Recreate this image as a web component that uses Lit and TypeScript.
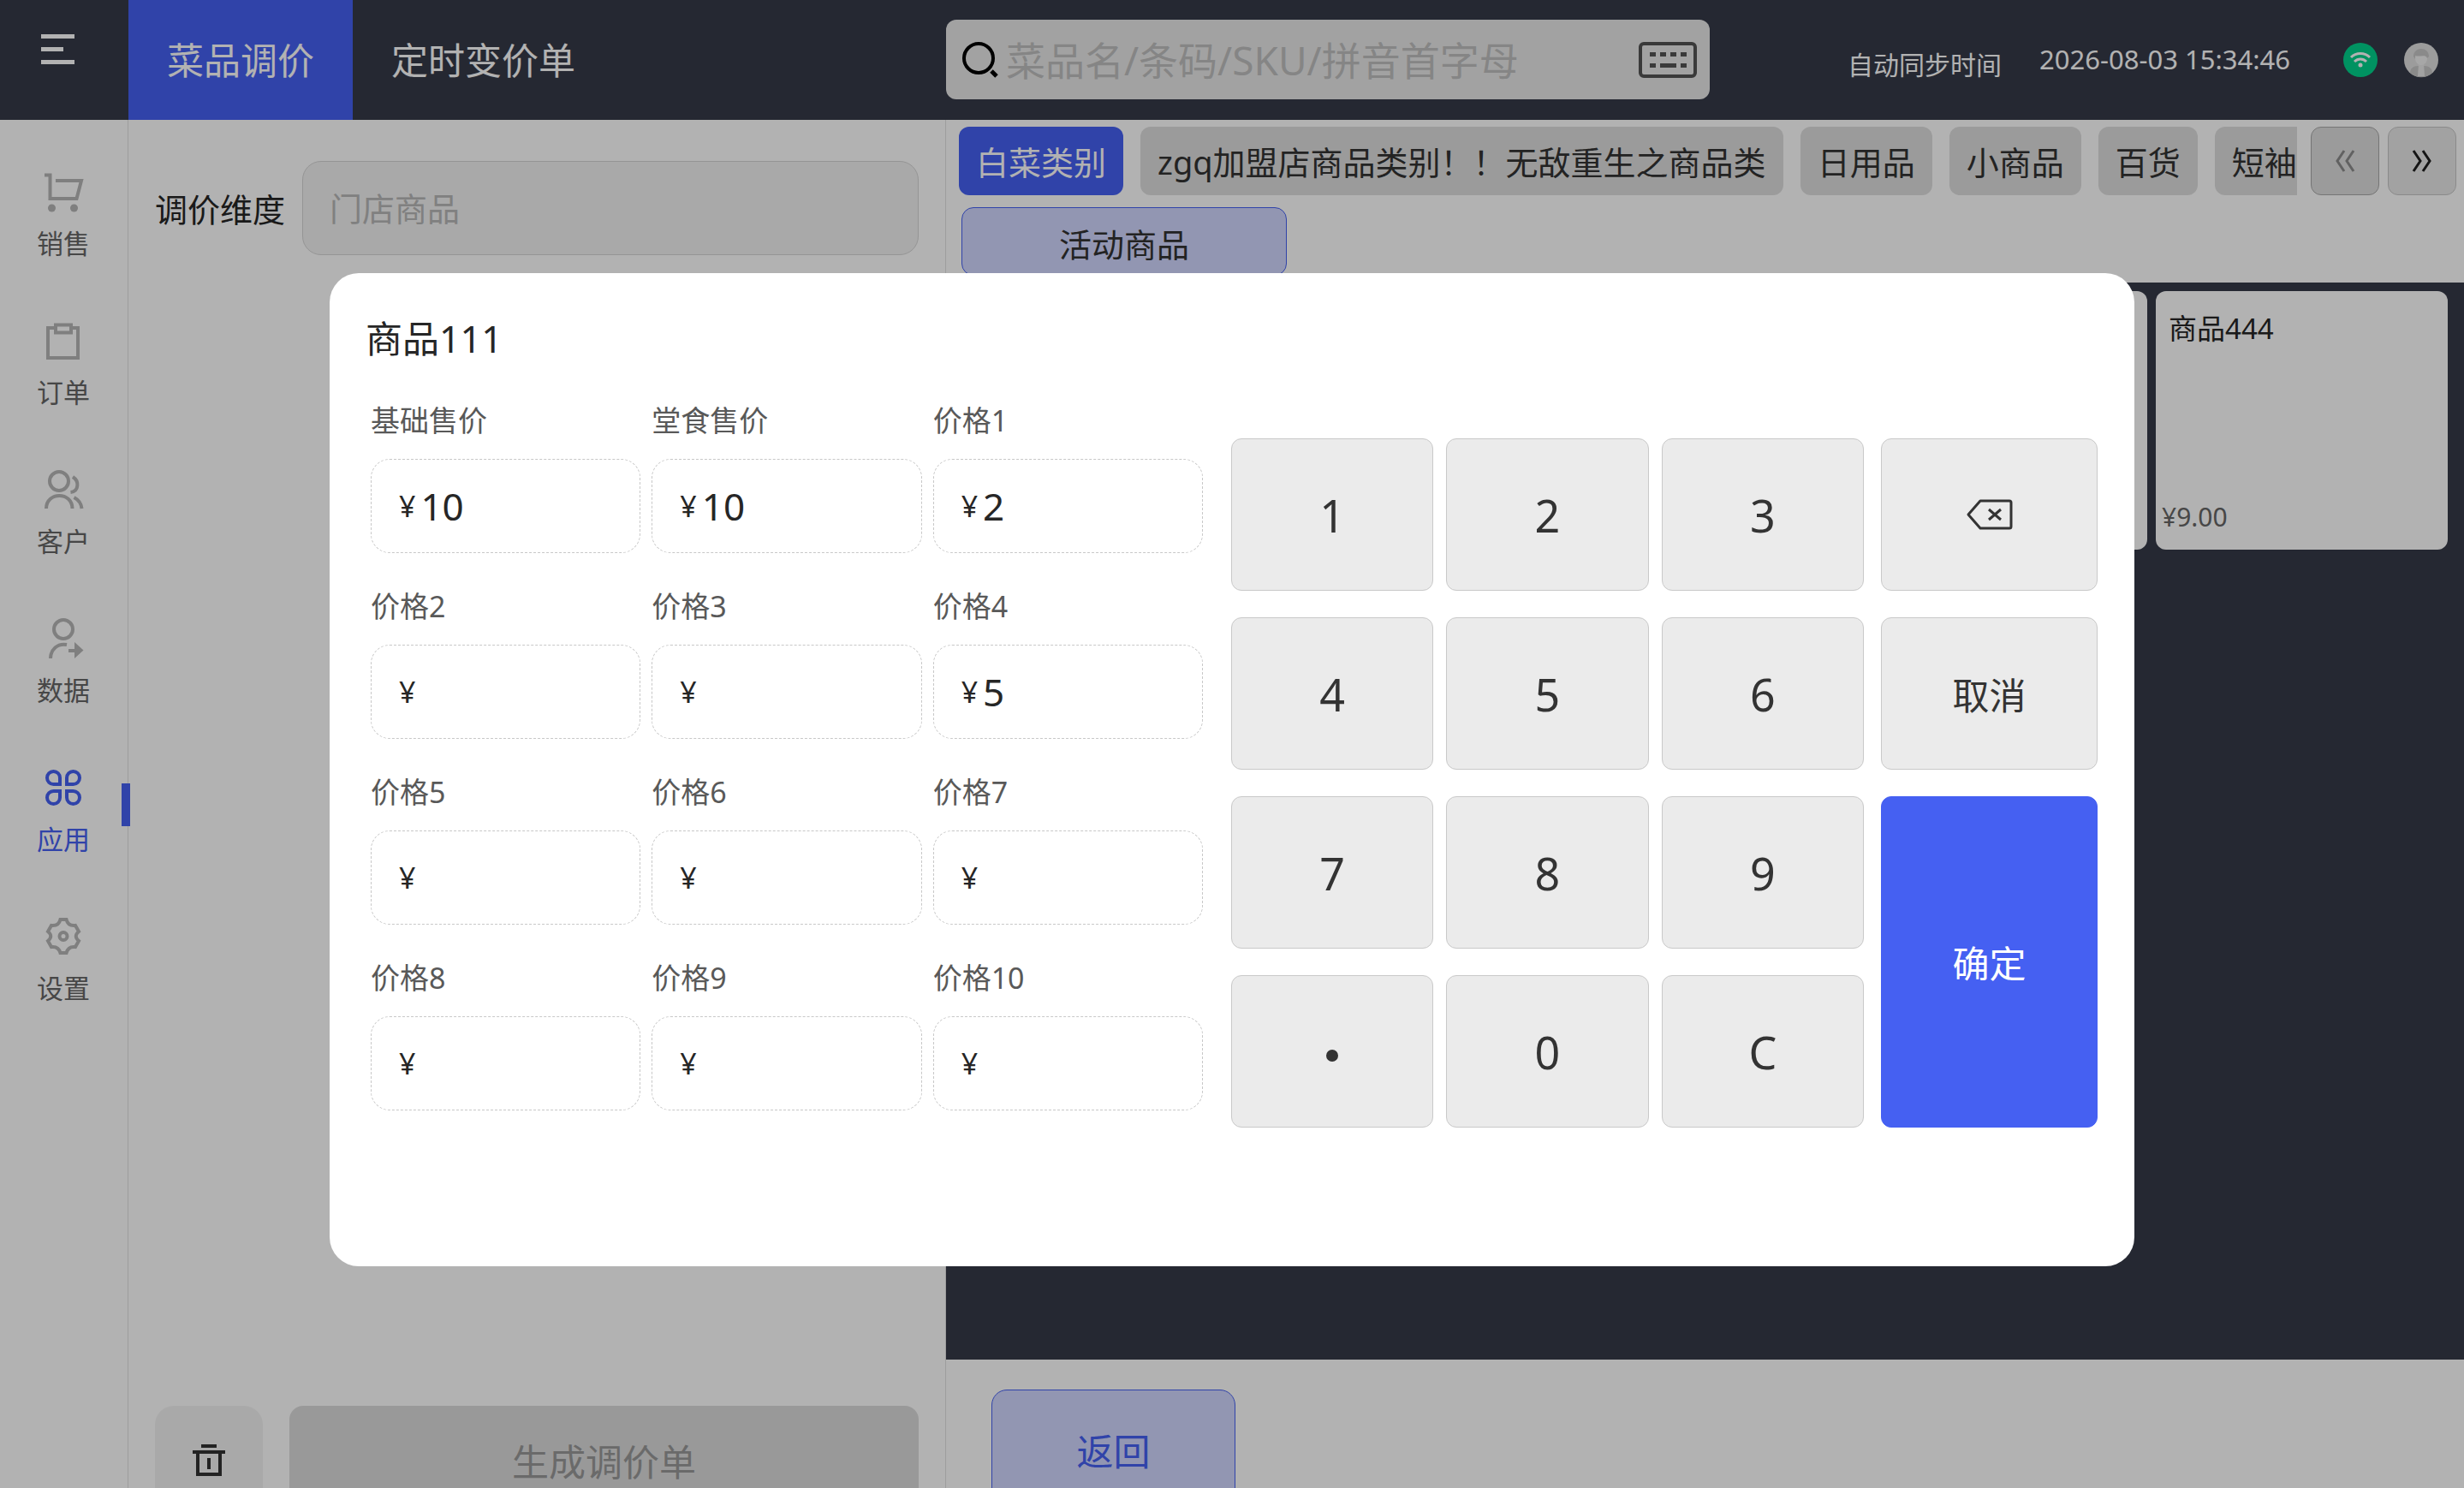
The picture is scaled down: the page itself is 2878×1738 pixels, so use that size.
import { LitElement, html, css, svg, nothing } from "lit";
import { customElement, state } from "lit/decorators.js";
import { classMap } from "lit/directives/class-map.js";

const navIcons = {
  cart: svg`<g fill="none" stroke="currentColor" stroke-width="4"><path d="M2 2.500H8.500V30H39.500L45 9H15"/></g><circle cx="10.500" cy="41" r="4.500" fill="currentColor"/><circle cx="36.500" cy="41" r="4.500" fill="currentColor"/>`,
  clipboard: svg`<g fill="none" stroke="currentColor" stroke-width="4"><path d="M14 7H6V42H41V7H33"/><path d="M15 3.500H33V12.500H15Z"/></g>`,
  customers: svg`<g transform="translate(0 -2)" fill="none" stroke="currentColor" stroke-width="4"><circle cx="19" cy="14" r="11"/><path d="M4 46C4 26 34.500 26 34.500 46"/><path d="M35 9C43 14 42 26 32.500 27"/><path d="M36.500 33C42 36 45 40 45.500 46"/></g>`,
  data: svg`<g transform="translate(0 -3)"><g fill="none" stroke="currentColor" stroke-width="4"><circle cx="24" cy="14" r="11"/><path d="M9 48C9 38 17 30 28 32"/></g><path d="M30 37H37V29L47.500 38.500L37 48V41H30Z" fill="currentColor"/></g>`,
  apps: svg`<g transform="translate(0 -2)" fill="none" stroke="currentColor" stroke-width="4"><path d="M20 20H12.500A7.500 7.500 0 1 1 20 12.500Z"/><path d="M28 20H35.500A7.500 7.500 0 1 0 28 12.500Z"/><path d="M20 28H12.500A7.500 7.500 0 1 0 20 35.500Z"/><path d="M28 28H35.500A7.500 7.500 0 1 1 28 35.500Z"/></g>`,
  settings: svg`<g fill="none" stroke="currentColor" stroke-width="4"><path d="M20.500 2H27.500Q29.500 10 38 9L42 16Q35.500 21.500 42 27L38 34Q29.500 33 27.500 41H20.500Q18.500 33 10 34L6 27Q12.500 21.500 6 16L10 9Q18.500 10 20.500 2Z"/><circle cx="24" cy="21.500" r="4.500"/></g>`,
};

const navItems: { label: string; icon: keyof typeof navIcons }[] = [
  { label: "销售", icon: "cart" },
  { label: "订单", icon: "clipboard" },
  { label: "客户", icon: "customers" },
  { label: "数据", icon: "data" },
  { label: "应用", icon: "apps" },
  { label: "设置", icon: "settings" },
];

const categories = [
  "白菜类别",
  "zgq加盟店商品类别！！无敌重生之商品类",
  "日用品",
  "小商品",
  "百货",
  "短袖",
];

const keys = ["1", "2", "3", "4", "5", "6", "7", "8", "9", ".", "0", "C"];

const base = css`
  * {
    box-sizing: border-box;
  }
  button,
  input {
    font: inherit;
    color: inherit;
    margin: 0;
    padding: 0;
    border: 0;
    background: none;
  }
  svg {
    display: block;
    flex: none;
    overflow: visible;
  }
`;

@customElement("pos-header")
export class PosHeader extends LitElement {
  static styles = [
    base,
    css`
      :host {
        display: flex;
        height: 140px;
        background: #363a48;
        color: #fff;
      }
      .start {
        display: flex;
        align-items: stretch;
        flex: 0 0 1105px;
      }
      .menu {
        display: flex;
        align-items: flex-start;
        width: 150px;
        padding: 40px 48px;
      }
      .tab {
        padding: 0 45px 4px;
        font-size: 43px;
      }
      .tab.active {
        background: #4560f2;
      }
      .search {
        display: flex;
        align-items: center;
        flex: 0 0 892px;
        height: 93px;
        margin-top: 23px;
        padding: 0 15px 0 18px;
        border-radius: 12px;
        background: #e9e9e9;
      }
      .query {
        flex: 1;
        min-width: 0;
        margin-left: 8px;
        height: 70px;
        font-size: 46px;
        color: #333;
        outline: none;
      }
      .query::placeholder {
        color: #bfbfbf;
        opacity: 1;
      }
      .end {
        display: flex;
        flex: 1;
        align-items: center;
        justify-content: flex-end;
        padding-right: 30px;
        white-space: nowrap;
      }
      .sync {
        font-size: 30px;
        padding-top: 8px;
      }
      .clock {
        font-size: 31px;
        margin: 0 62px 0 44px;
        padding-bottom: 2px;
      }
      .avatar {
        margin-left: 31px;
      }
    `,
  ];

  render() {
    return html`
      <div class="start">
        <button class="menu" aria-label="菜单">
          <svg width="40" height="36" viewBox="0 0 40 36" fill="#fff">
            <path d="M0 0H39V5H0ZM0 15H26V20H0ZM0 30H39V35H0Z" />
          </svg>
        </button>
        <button class="tab active">菜品调价</button>
        <button class="tab">定时变价单</button>
      </div>
      <div class="search">
        <svg width="44" height="44" viewBox="0 0 44 44" fill="none" stroke="#000" stroke-width="4">
          <circle cx="20" cy="20" r="17" />
          <path d="M35 35L41 41" stroke-width="5" />
        </svg>
        <input class="query" type="text" aria-label="搜索" placeholder="菜品名/条码/SKU/拼音首字母" />
        <button aria-label="键盘">
          <svg width="68" height="42" viewBox="0 0 68 42">
            <rect x="2" y="2" width="64" height="38" rx="4" fill="none" stroke="#535353" stroke-width="4" />
            <path fill="#535353" d="M13 12h7v5h-7zM25 12h7v5h-7zM37 12h7v5h-7zM49 12h7v5h-7zM13 25h7v5h-7zM25 25h19v5H25zM49 25h7v5h-7z" />
          </svg>
        </button>
      </div>
      <div class="end">
        <span class="sync">自动同步时间</span>
        <time class="clock">2026-08-03 15:34:46</time>
        <svg width="40" height="40" viewBox="0 0 40 40" fill="none" stroke="#fff" stroke-width="3">
          <circle cx="20" cy="20" r="20" fill="#00d28c" stroke="none" />
          <path d="M9 17C15 11 25 11 31 17M13 22C17 18 23 18 27 22" />
          <circle cx="20" cy="26" r="2.500" fill="#fff" stroke="none" />
        </svg>
        <svg class="avatar" width="40" height="40" viewBox="0 0 40 40">
          <circle cx="20" cy="20" r="20" fill="#e0e0e0" />
          <path d="M7 35C7 30 11 27 16 27H24C29 27 33 30 33 35C26 42 14 42 7 35Z" fill="#c6c6c6" />
          <path d="M17 24H23L24 39H16Z" fill="#e8e8e8" />
          <ellipse cx="20" cy="18" rx="7" ry="8" fill="#f0f0f0" />
          <path d="M11 16C11 4 29 4 29 16L27 18C25 13 18 17 13 15V19Z" fill="#c6c6c6" />
        </svg>
      </div>
    `;
  }
}

@customElement("pos-sidebar")
export class PosSidebar extends LitElement {
  static styles = [
    base,
    css`
      :host {
        display: block;
        flex: 0 0 150px;
        padding-top: 62px;
        border-right: 1px solid #e1e1e1;
        background: #fff;
      }
      .nav {
        display: flex;
        flex-direction: column;
        gap: 70px;
      }
      .item {
        position: relative;
        display: flex;
        flex-direction: column;
        align-items: center;
        gap: 12px;
        height: 104px;
        padding-right: 1px;
        font-size: 31px;
        line-height: 44px;
        color: #666;
        text-decoration: none;
      }
      .item svg {
        color: #b6b6b6;
      }
      .item.active,
      .item.active svg {
        color: #4560f2;
      }
      .item.active::after {
        content: "";
        position: absolute;
        right: -3px;
        top: 17px;
        width: 10px;
        height: 50px;
        background: #4560f2;
      }
    `,
  ];

  render() {
    return html`<nav class="nav">
      ${navItems.map(
        (n) => html`<a href="#" class=${classMap({ item: true, active: n.icon === "apps" })}>
          <svg width="48" height="48" viewBox="0 0 48 48">${navIcons[n.icon]}</svg>
          <span>${n.label}</span>
        </a>`
      )}
    </nav>`;
  }
}

@customElement("pos-order-panel")
export class PosOrderPanel extends LitElement {
  static styles = [
    base,
    css`
      :host {
        display: flex;
        flex-direction: column;
        justify-content: space-between;
        flex: 0 0 955px;
        padding: 48px 31px 0;
        border-right: 1px solid #e1e1e1;
        background: #fff;
      }
      .field {
        display: flex;
        align-items: center;
        gap: 20px;
        font-size: 38px;
        color: #262626;
      }
      .field label {
        padding-bottom: 2px;
      }
      .dimension {
        flex: 1;
        min-width: 0;
        height: 110px;
        padding: 0 31px;
        border: 1px solid #d6d6d6;
        border-radius: 22px;
        background: #f2f2f2;
      }
      .dimension::placeholder {
        color: #b8b8b8;
        opacity: 1;
      }
      .actions {
        display: flex;
        gap: 31px;
        margin-bottom: -31px;
      }
      .clear,
      .create {
        display: flex;
        align-items: center;
        justify-content: center;
        height: 127px;
      }
      .clear {
        width: 126px;
        border-radius: 22px;
        background: #f3f3f3;
      }
      .create {
        flex: 1;
        border-radius: 16px;
        background: #dcdcdc;
        color: #999;
        font-size: 43px;
      }
    `,
  ];

  render() {
    return html`
      <div class="field">
        <label for="dimension">调价维度</label>
        <input id="dimension" class="dimension" type="text" placeholder="门店商品" />
      </div>
      <div class="actions">
        <button class="clear" aria-label="清空">
          <svg width="38" height="38" viewBox="0 0 38 38" fill="none" stroke="#333" stroke-width="4">
            <path d="M10 2H28M0 9H38M6 9V35H32V9M19 16V29" />
          </svg>
        </button>
        <button class="create" disabled>生成调价单</button>
      </div>
    `;
  }
}

@customElement("pos-catalog")
export class PosCatalog extends LitElement {
  static styles = [
    base,
    css`
      :host {
        display: flex;
        flex-direction: column;
        flex: 1;
        min-width: 0;
        background: #fff;
        color: #333;
      }
      .categories {
        display: flex;
        gap: 10px;
        padding: 8px 9px 0 15px;
      }
      .strip {
        display: flex;
        flex: 1;
        gap: 20px;
        min-width: 0;
        margin-right: 6px;
        overflow: hidden;
      }
      .category {
        flex: none;
        height: 80px;
        padding: 0 20px 2px;
        border-radius: 12px;
        background: #dfdfdf;
        font-size: 38px;
        white-space: nowrap;
      }
      .category.active {
        background: #4560f2;
        color: #fff;
      }
      .page {
        display: flex;
        align-items: center;
        justify-content: center;
        flex: none;
        width: 80px;
        height: 80px;
        border: 1px solid #c6c6c6;
        border-radius: 12px;
        background: #e9e9e9;
        color: #1f1f1f;
      }
      .page:disabled {
        border-color: #a8a8a8;
        background: #dfdfdf;
        color: #8c8c8c;
      }
      .subcategories {
        padding: 14px 18px 8px;
      }
      .subcategory,
      .back {
        border: 1px solid #4560f2;
        background: #d2d7ff;
      }
      .subcategory {
        display: block;
        width: 380px;
        height: 80px;
        border-radius: 14px;
        font-size: 38px;
        padding-top: 3px;
      }
      .products {
        display: grid;
        grid-template-columns: repeat(5, minmax(0, 1fr));
        grid-auto-rows: 302px;
        gap: 10px;
        flex: 1;
        padding: 10px 19px 10px 9px;
        background: #363a48;
      }
      .product {
        display: flex;
        flex-direction: column;
        justify-content: space-between;
        align-items: flex-start;
        padding: 18px 7px;
        border-radius: 12px;
        background: #fff;
        color: #262626;
        font-size: 33px;
      }
      .name {
        padding-left: 8px;
      }
      .price {
        color: #666;
        font-size: 30px;
      }
      .footer {
        height: 150px;
        padding: 35px 53px 0;
      }
      .back {
        width: 285px;
        height: 140px;
        border-radius: 18px;
        color: #4560f2;
        font-size: 43px;
      }
    `,
  ];

  render() {
    return html`
      <div class="categories">
        <div class="strip">
          ${categories.map(
            (c, i) => html`<button class=${classMap({ category: true, active: i === 0 })}>${c}</button>`
          )}
        </div>
        <button class="page" disabled aria-label="上一页">
          <svg width="24" height="26" viewBox="0 0 24 26" fill="none" stroke="currentColor" stroke-width="3">
            <path d="M11 1L3 13L11 25M22 1L14 13L22 25" />
          </svg>
        </button>
        <button class="page" aria-label="下一页">
          <svg width="24" height="26" viewBox="0 0 24 26" fill="none" stroke="currentColor" stroke-width="3">
            <path d="M2 1L10 13L2 25M13 1L21 13L13 25" />
          </svg>
        </button>
      </div>
      <div class="subcategories"><button class="subcategory">活动商品</button></div>
      <div class="products">
        <div class="product"></div>
        <div class="product"></div>
        <div class="product"></div>
        <div class="product"></div>
        <div class="product">
          <span class="name">商品444</span>
          <span class="price">¥9.00</span>
        </div>
      </div>
      <div class="footer"><button class="back">返回</button></div>
    `;
  }
}

@customElement("pos-price-dialog")
export class PosPriceDialog extends LitElement {
  @state() private selected = 0;
  @state() private prices = [
    { label: "基础售价", value: "10" },
    { label: "堂食售价", value: "10" },
    { label: "价格1", value: "2" },
    { label: "价格2", value: "" },
    { label: "价格3", value: "" },
    { label: "价格4", value: "5" },
    { label: "价格5", value: "" },
    { label: "价格6", value: "" },
    { label: "价格7", value: "" },
    { label: "价格8", value: "" },
    { label: "价格9", value: "" },
    { label: "价格10", value: "" },
  ];

  static styles = [
    base,
    css`
      :host {
        position: fixed;
        inset: 0;
        display: flex;
        align-items: flex-start;
        padding: 319px 385px 0;
        background: rgba(0, 0, 0, 0.3);
      }
      .dialog {
        flex: 1;
        min-width: 0;
        padding: 47px 43px 162px 42px;
        border-radius: 34px;
        background: #fff;
        color: #262626;
      }
      .title {
        margin: 0;
        font-size: 43px;
        line-height: 60px;
        font-weight: 400;
      }
      .body {
        display: grid;
        grid-template-columns: minmax(0, 1005fr) minmax(0, 739fr) minmax(0, 273fr);
        margin-left: 6px;
      }
      .prices {
        display: grid;
        grid-template-columns: repeat(3, minmax(0, 1fr));
        align-content: start;
        gap: 38px 13px;
        margin: 41px 33px 0 0;
      }
      .price {
        display: flex;
        flex-direction: column;
        gap: 21px;
      }
      .label {
        font-size: 34px;
        line-height: 48px;
        color: #595959;
      }
      .box {
        display: flex;
        align-items: center;
        gap: 6px;
        height: 110px;
        padding: 0 32px;
        border: 1px dashed #c8c8c8;
        border-radius: 22px;
      }
      .yen {
        font-size: 34px;
      }
      .value {
        flex: 1;
        min-width: 0;
        height: 80px;
        font-size: 44px;
        outline: none;
      }
      .digits,
      .commands {
        display: grid;
        grid-template-rows: repeat(4, 178px);
        row-gap: 31px;
        margin-top: 86px;
      }
      .digits {
        grid-template-columns: repeat(3, minmax(0, 1fr));
        column-gap: 15px;
      }
      .commands {
        margin-left: 20px;
      }
      .key {
        display: flex;
        align-items: center;
        justify-content: center;
        border: 1px solid #c9c9c9;
        border-radius: 12px;
        background: #ebebeb;
        color: #333;
        font-size: 52px;
      }
      .point {
        width: 14px;
        height: 14px;
        margin-top: 10px;
        border-radius: 50%;
        background: #333;
      }
      .text {
        font-size: 43px;
      }
      .confirm {
        grid-row: span 2;
        border-color: #4560f2;
        background: #4560f2;
        color: #fff;
      }
    `,
  ];

  private edit(change: (v: string) => string) {
    this.prices = this.prices.map((p, i) => (i === this.selected ? { ...p, value: change(p.value) } : p));
  }

  private press(key: string) {
    this.edit((v) => (key === "C" ? "" : v + key));
  }

  render() {
    return html`<section class="dialog" role="dialog" aria-labelledby="title">
      <h2 class="title" id="title">商品111</h2>
      <div class="body">
        <div class="prices">
          ${this.prices.map(
            (p, i) => html`<div class="price">
              <label class="label" for="price-${i}">${p.label}</label>
              <div class="box">
                <span class="yen">¥</span>
                <input
                  id="price-${i}"
                  class="value"
                  type="text"
                  .value=${p.value}
                  @focus=${() => (this.selected = i)}
                />
              </div>
            </div>`
          )}
        </div>
        <div class="digits">
          ${keys.map((k) =>
            k === "."
              ? html`<button class="key" aria-label="小数点" @click=${() => this.press(k)}>
                  <span class="point"></span>
                </button>`
              : html`<button class="key" @click=${() => this.press(k)}>${k}</button>`
          )}
        </div>
        <div class="commands">
          <button class="key" aria-label="退格" @click=${() => this.edit((v) => v.slice(0, -1))}>
            <svg width="54" height="36" viewBox="0 0 54 36" fill="none" stroke="#333" stroke-width="3" stroke-linejoin="round">
              <path d="M16 2H50Q52 2 52 4V32Q52 34 50 34H16L2 18Z" />
              <path d="M26 12L40 24M40 12L26 24" />
            </svg>
          </button>
          <button class="key text">取消</button>
          <button class="key text confirm">确定</button>
        </div>
      </div>
    </section>`;
  }
}

@customElement("app-root")
export class AppRoot extends LitElement {
  @state() private editing = true;

  static styles = [
    base,
    css`
      :host {
        display: flex;
        flex-direction: column;
        height: 100vh;
        overflow: hidden;
        font-family: "Noto Sans", "Noto Sans CJK SC", sans-serif;
        background: #fff;
      }
      .main {
        display: flex;
        flex: 1;
        min-height: 0;
      }
    `,
  ];

  render() {
    return html`
      <pos-header></pos-header>
      <div class="main">
        <pos-sidebar></pos-sidebar>
        <pos-order-panel></pos-order-panel>
        <pos-catalog></pos-catalog>
      </div>
      ${this.editing ? html`<pos-price-dialog></pos-price-dialog>` : nothing}
    `;
  }
}
